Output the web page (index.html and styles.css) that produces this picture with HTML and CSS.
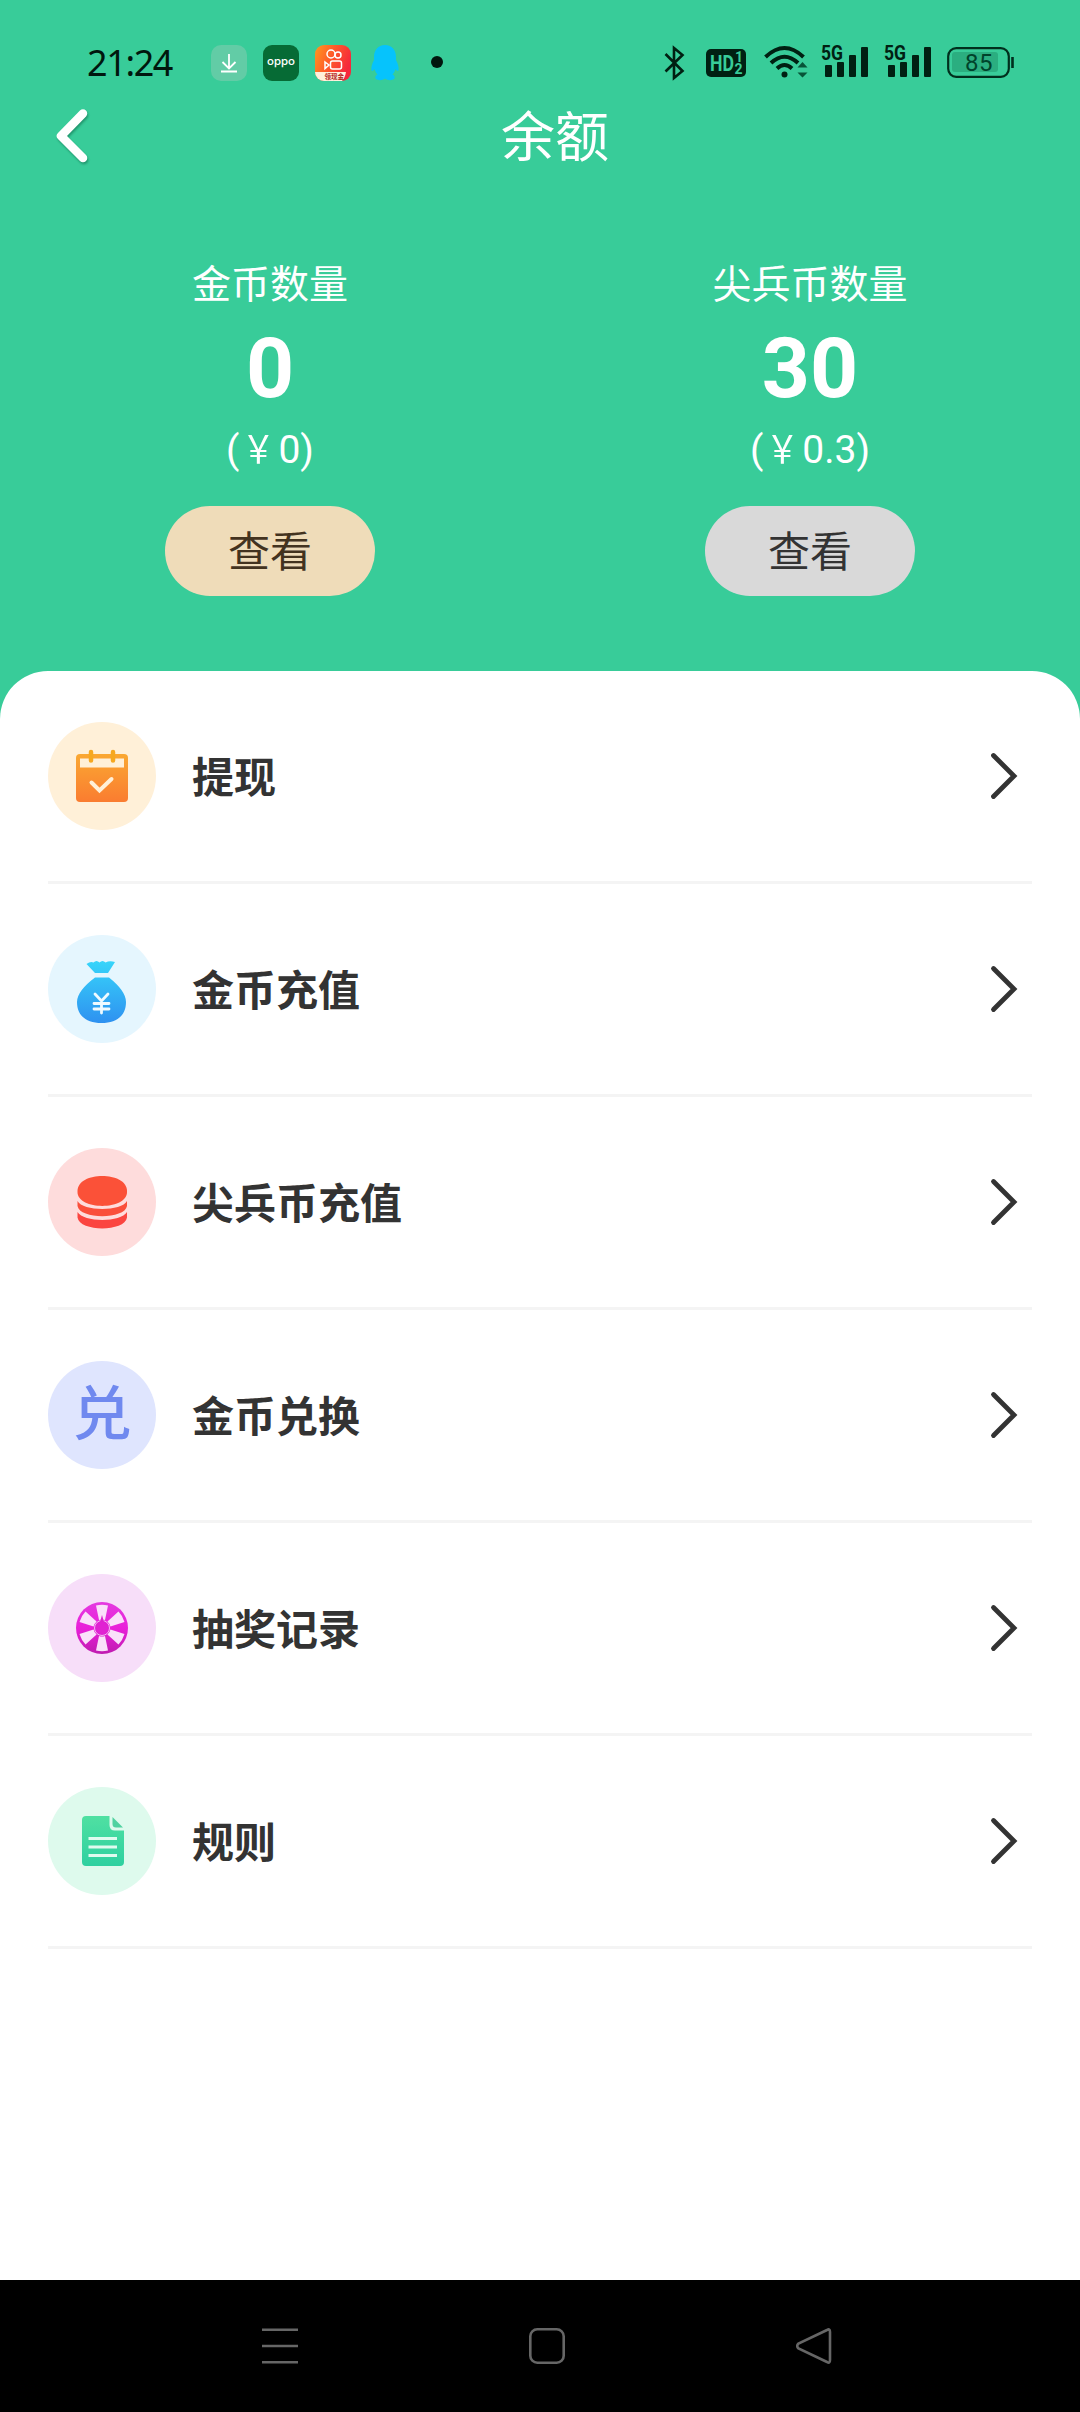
FILE: index.html
```html
<!DOCTYPE html>
<html lang="zh-CN">
<head>
<meta charset="utf-8">
<title>余额</title>
<link rel="stylesheet" href="styles.css">
</head>
<body>
<div class="screen">
  <header class="hero">
    <div class="status">
      <span class="clock">21:24</span>
      <div class="notices">
        <svg class="notice" viewBox="0 0 36 36"><rect width="36" height="36" rx="10" fill="#62cca6"/><path d="M18 9v14M11.500 17l6.500 6.500 6.500-6.500M10 26.500h16" fill="none" stroke="#fff" stroke-width="1.800"/></svg>
        <svg class="notice" viewBox="0 0 36 36"><rect width="36" height="36" rx="9" fill="#066b35"/><text x="4" y="20" class="brand" textLength="28" lengthAdjust="spacingAndGlyphs">oppo</text></svg>
        <svg class="notice" viewBox="0 0 36 36">
          <defs><linearGradient id="ks" x1="0" y1="0" x2="1" y2=".4"><stop offset="0" stop-color="#ff9a1e"/><stop offset=".5" stop-color="#ff5a2a"/><stop offset="1" stop-color="#f5283c"/></linearGradient><clipPath id="ksClip"><rect width="36" height="36" rx="9"/></clipPath></defs>
          <g clip-path="url(#ksClip)"><rect width="36" height="36" fill="url(#ks)"/><path d="M0 27h31q-1 6-4 9H0z" fill="#fff0dc"/></g>
          <g fill="none" stroke="#fff" stroke-width="1.500"><circle cx="16" cy="9" r="4"/><circle cx="23" cy="10" r="3"/><rect x="15.500" y="16" width="11" height="8" rx="2"/><path d="M10 17l4 3-4 3.500z"/></g>
          <text x="9.500" y="34.300" class="tiny-tag">领现金</text>
        </svg>
        <svg class="notice" viewBox="0 0 36 36"><path d="M18 0c-7 0-11 5-11 12v3c-2 4-3 7-2.500 10.500 1 1 2.500-.500 3.200-1.500.300 2 1.300 4 2.800 5.500-2 1-2.500 2.500-2 4 2.500 2.500 7 2 9.500 0 2.500 2 7 2.500 9.500 0 .500-1.500 0-3-2-4 1.500-1.500 2.500-3.500 2.800-5.500.700 1 2.200 2.500 3.200 1.500.500-3.500-.500-6.500-2.500-10.500v-3C29 5 25 0 18 0z" fill="#06c3fc"/></svg>
        <svg class="notice" viewBox="0 0 36 36"><circle cx="18" cy="17" r="6" fill="#00170e"/></svg>
      </div>
      <div class="system">
        <svg class="bt" viewBox="0 0 22 36"><path d="M1.500 9l17 17L10 33V3l8.500 7-17 16.500" fill="none" stroke="#002012" stroke-width="2.600"/></svg>
        <svg class="hd" viewBox="0 0 40 36"><rect y="4" width="40" height="28" rx="5" fill="#002012"/><text x="4" y="26" class="hd-text" textLength="24" lengthAdjust="spacingAndGlyphs">HD</text><text x="29" y="17" class="hd-num">1</text><text x="28.500" y="29" class="hd-num">2</text></svg>
        <svg class="wifi" viewBox="0 0 44 36"><g fill="none" stroke="#002012" stroke-width="4"><path d="M1.500 12q19-18 38 0M7 18q13.500-12.500 27 0M13 23.500q7.500-7 15 0"/></g><circle cx="20.500" cy="29.500" r="3" fill="#002012"/><path d="M33.500 22.500l5-5.500 5 5.500zM33.500 27.500h10l-5 5z" fill="#075438"/></svg>
        <svg class="signal" viewBox="0 0 50 42"><g fill="#002012"><rect x="5" y="26" width="7" height="12" rx="1"/><rect x="17" y="23" width="7" height="15" rx="1"/><rect x="29" y="16" width="7" height="22" rx="1"/><rect x="41" y="8" width="7" height="30" rx="1"/></g><text x="1" y="21" class="net" textLength="22" lengthAdjust="spacingAndGlyphs">5G</text></svg>
        <svg class="signal" viewBox="0 0 50 42"><g fill="#002012"><rect x="5" y="26" width="7" height="12" rx="1"/><rect x="17" y="23" width="7" height="15" rx="1"/><rect x="29" y="16" width="7" height="22" rx="1"/><rect x="41" y="8" width="7" height="30" rx="1"/></g><text x="1" y="21" class="net" textLength="22" lengthAdjust="spacingAndGlyphs">5G</text></svg>
        <svg class="battery" viewBox="0 0 68 36"><rect x="5" y="7" width="46" height="20" rx="3" fill="#2bae80"/><rect x="1.200" y="3.200" width="60.600" height="28.600" rx="8" fill="none" stroke="#002f1d" stroke-width="2.200"/><path d="M65.500 12v11" stroke="#002f1d" stroke-width="2.600"/><text x="32" y="25.500" class="charge">85</text></svg>
      </div>
    </div>
    <div class="titlebar">
      <svg class="back" viewBox="0 0 40 60"><path d="M31 7.500L9 30l22 22" fill="none" stroke="#fff" stroke-width="8.500" stroke-linecap="round" stroke-linejoin="round"/></svg>
      <h1 class="title">余额</h1>
    </div>
    <div class="stats">
      <section class="stat">
        <div class="stat-label">金币数量</div>
        <div class="stat-value">0</div>
        <div class="stat-price">(<span class="yen">￥</span>0)</div>
        <button class="view view-gold">查看</button>
      </section>
      <section class="stat">
        <div class="stat-label">尖兵币数量</div>
        <div class="stat-value">30</div>
        <div class="stat-price">(<span class="yen">￥</span>0.3)</div>
        <button class="view view-silver">查看</button>
      </section>
    </div>
  </header>
  <main class="panel">
    <div class="row">
      <span class="badge badge-orange"><svg viewBox="0 0 108 108">
        <defs><linearGradient id="or" x1="0" y1="0" x2="0" y2="1"><stop offset="0" stop-color="#faa832"/><stop offset="1" stop-color="#fa7c30"/></linearGradient></defs>
        <rect x="28" y="32" width="52" height="48" rx="4" fill="url(#or)"/><rect x="32" y="36.500" width="44" height="9" fill="#fff0d8"/><path d="M43 30v8.500M65 30v8.500" stroke="#f6a820" stroke-width="4.500" stroke-linecap="round"/><path d="M43.500 60.500l8 8L63.500 57" fill="none" stroke="#fff0d8" stroke-width="4" stroke-linecap="round"/></svg></span>
      <span class="name">提现</span>
      <svg class="chevron" viewBox="0 0 28 48"><path d="M3.500 3.500l20.500 20.500L3.500 44.500"/></svg>
    </div>
    <div class="row">
      <span class="badge badge-blue"><svg viewBox="0 0 108 108">
        <defs><linearGradient id="bl" gradientUnits="userSpaceOnUse" x1="0" y1="26" x2="0" y2="90"><stop offset="0" stop-color="#37d5fa"/><stop offset="1" stop-color="#2e8ff0"/></linearGradient></defs>
        <path d="M38.500 29q4-3 7-1.500 3-3 6 0 3-3 6 0 4-2 9.500-.500l-7 11H47zM47 42.500h14Q78 56 78 67c0 13.500-9 21-24.500 21S29 80.500 29 67q0-11 18-24.500z" fill="url(#bl)"/><path d="M47 59l6.500 7 6.500-7M53.500 66v12M46 68.500h15M46 74h15" fill="none" stroke="#effaff" stroke-width="2.800" stroke-linecap="round"/></svg></span>
      <span class="name">金币充值</span>
      <svg class="chevron" viewBox="0 0 28 48"><path d="M3.500 3.500l20.500 20.500L3.500 44.500"/></svg>
    </div>
    <div class="row">
      <span class="badge badge-red"><svg viewBox="0 0 108 108"><path d="M29.500 43c0-20 49.500-20 49.500 0v1c0 18.500-49.500 18.500-49.500 0z" fill="#fb5138"/><path d="M29.500 53c5 10.500 44.500 10.500 49.500 0v5c-2 13.500-47.500 13.500-49.500 0z" fill="#fa4f3b"/><path d="M29.500 64c6 10.500 43.500 10.500 49.500 0v5.500c-2 14.500-47.500 14.500-49.500 0z" fill="#fb4540"/></svg></span>
      <span class="name">尖兵币充值</span>
      <svg class="chevron" viewBox="0 0 28 48"><path d="M3.500 3.500l20.500 20.500L3.500 44.500"/></svg>
    </div>
    <div class="row">
      <span class="badge badge-indigo"><span class="badge-char">兑</span></span>
      <span class="name">金币兑换</span>
      <svg class="chevron" viewBox="0 0 28 48"><path d="M3.500 3.500l20.500 20.500L3.500 44.500"/></svg>
    </div>
    <div class="row">
      <span class="badge badge-pink"><svg viewBox="0 0 108 108">
        <defs><linearGradient id="pk" x1="0" y1="0" x2="0" y2="1"><stop offset="0" stop-color="#e43be0"/><stop offset=".5" stop-color="#e91fd9"/><stop offset="1" stop-color="#bf1cb0"/></linearGradient><path id="spoke" d="M48 31.500q6-1.500 12 0L57 46q-3-1-6 0z"/></defs>
        <circle cx="54" cy="54" r="26" fill="url(#pk)"/><g fill="#fae0fa"><use href="#spoke"/><use href="#spoke" transform="rotate(60 54 54)"/><use href="#spoke" transform="rotate(120 54 54)"/><use href="#spoke" transform="rotate(180 54 54)"/><use href="#spoke" transform="rotate(240 54 54)"/><use href="#spoke" transform="rotate(300 54 54)"/></g><circle cx="54" cy="54" r="7.500" fill="#e022d2" stroke="#f3b8f2" stroke-width="1"/><path d="M54 41l2 7h-4z" fill="#dc23ce"/></svg></span>
      <span class="name">抽奖记录</span>
      <svg class="chevron" viewBox="0 0 28 48"><path d="M3.500 3.500l20.500 20.500L3.500 44.500"/></svg>
    </div>
    <div class="row">
      <span class="badge badge-green"><svg viewBox="0 0 108 108">
        <defs><linearGradient id="gr" x1="0" y1="0" x2="0" y2="1"><stop offset="0" stop-color="#50e0a2"/><stop offset="1" stop-color="#2ed0a0"/></linearGradient></defs>
        <path d="M38 29h23.500v9q0 5.500 5.500 5.500h9V75q0 4-4 4H38q-4 0-4-4V33q0-4 4-4z" fill="url(#gr)"/><path d="M64.500 30L75 40.500h-7q-3.500 0-3.500-3.500z" fill="#50d2a0"/><path d="M40.500 51.500H69M40.500 60H69M40.500 68.500H69" stroke="#e0fbef" stroke-width="3"/></svg></span>
      <span class="name">规则</span>
      <svg class="chevron" viewBox="0 0 28 48"><path d="M3.500 3.500l20.500 20.500L3.500 44.500"/></svg>
    </div>
  </main>
  <nav class="navbar">
    <svg class="nav-icon" viewBox="0 0 36 36"><path d="M0 1.800h36M0 18h36M0 34.200h36"/></svg>
    <svg class="nav-icon" viewBox="0 0 36 36"><rect x="1.300" y="1.300" width="33.400" height="33.400" rx="7"/></svg>
    <svg class="nav-icon" viewBox="0 0 36 36"><path d="M31 2Q34 0 34 4v28q0 4-3 2L2.500 20.500Q0 18 2.500 15.500z"/></svg>
  </nav>
</div>
</body>
</html>
```
FILE: styles.css
```css
* { box-sizing: border-box; }

body {
  margin: 0;
  background: #38cc99;
  color: #333;
  font-family: Roboto, "Noto Sans CJK SC", sans-serif;
}

svg { display: block; flex: none; }

.screen {
  display: flex;
  flex-direction: column;
  width: 1080px;
  height: 2412px;
}

.hero {
  height: 671px;
  color: #fff;
}

/* Status bar */
.status {
  display: flex;
  align-items: flex-start;
  height: 100px;
  padding: 45px 65px 0 87px;
}

.clock {
  width: 124px;
  color: #00170e;
  font: 36px/36px "Noto Sans", sans-serif;
  letter-spacing: -1.4px;
}

.notices { display: flex; gap: 16px; }
.notice { width: 36px; height: 36px; }
.brand { font: 500 11px Inter, sans-serif; fill: #fff; }
.tiny-tag { font: bold 6.5px "Noto Sans CJK SC", sans-serif; fill: #b3261e; }

.system { display: flex; height: 36px; margin-left: auto; }
.bt { width: 22px; height: 36px; }
.hd { width: 40px; height: 36px; margin-left: 20px; }
.wifi { width: 44px; height: 36px; margin-left: 18px; }
.signal { width: 50px; height: 42px; margin: -6px 0 0 12px; }
.signal + .signal { margin-left: 13px; }
.battery { width: 68px; height: 36px; margin-left: 14px; }
.hd-text { font: bold 22px Roboto, sans-serif; fill: #38cc99; }
.hd-num { font: bold 14px Roboto, sans-serif; fill: #38cc99; }
.net { font: bold 20px Roboto, sans-serif; fill: #002012; }
.charge { font: 24px Roboto, sans-serif; fill: #00432b; text-anchor: middle; letter-spacing: .5px; }

/* Title bar */
.titlebar {
  display: flex;
  align-items: center;
  height: 72px;
  padding-left: 52px;
}

.back {
  width: 40px;
  height: 60px;
  filter: drop-shadow(1px 2px 1px rgba(0, 70, 45, .4));
}

.title {
  flex: 1;
  margin: 0;
  padding: 6px 62px 0 0;
  font-size: 54px;
  font-weight: 400;
  line-height: 72px;
  text-align: center;
}

/* Balances */
.stats {
  display: grid;
  grid-template-columns: 1fr 1fr;
  padding-top: 85px;
}

.stat {
  display: flex;
  flex-direction: column;
  align-items: center;
}

.stat-label { font-size: 39px; line-height: 56px; }
.stat-value { font-size: 84px; font-weight: 700; line-height: 112px; }
.stat-price { font-size: 39px; line-height: 50px; }
.yen { display: inline-block; line-height: 1; transform: scaleX(.84); }

.view {
  width: 210px;
  height: 90px;
  margin-top: 31px;
  padding: 4px 0 0;
  border: 0;
  border-radius: 45px;
  color: #333;
  font-family: inherit;
  font-size: 42px;
  line-height: 86px;
}

.view-gold { background: #efdcb9; color: #43331f; }
.view-silver { background: #d9d9d9; }

/* Menu */
.panel {
  flex: 1;
  padding: 0 48px;
  border-radius: 48px 48px 0 0;
  background: #fff;
}

.row {
  display: flex;
  align-items: center;
  height: 213px;
  padding-right: 14px;
  border-bottom: 3px solid #f4f4f4;
}

.badge {
  display: flex;
  align-items: center;
  justify-content: center;
  width: 108px;
  height: 108px;
  border-radius: 50%;
}

.badge svg { width: 108px; height: 108px; }
.badge-orange { background: #fff0d8; }
.badge-blue { background: #e5f6fe; }
.badge-red { background: #fedcdc; }
.badge-indigo { background: #dfe5fe; }
.badge-pink { background: #f7def9; }
.badge-green { background: #defaed; }

.badge-char {
  color: #7089ef;
  font-size: 59px;
  font-weight: 500;
  line-height: 80px;
}

.name {
  flex: 1;
  margin-left: 36px;
  padding-top: 6px;
  font-size: 42px;
  font-weight: 700;
  line-height: 60px;
}

.chevron {
  width: 28px;
  height: 48px;
  fill: none;
  stroke: #333;
  stroke-width: 4.8;
  stroke-linecap: round;
}

/* System navigation */
.navbar {
  display: flex;
  justify-content: space-between;
  height: 132px;
  padding: 48px 248px 0 262px;
  background: #000;
}

.nav-icon {
  width: 36px;
  height: 36px;
  fill: none;
  stroke: #666;
  stroke-width: 2.6;
}
```
